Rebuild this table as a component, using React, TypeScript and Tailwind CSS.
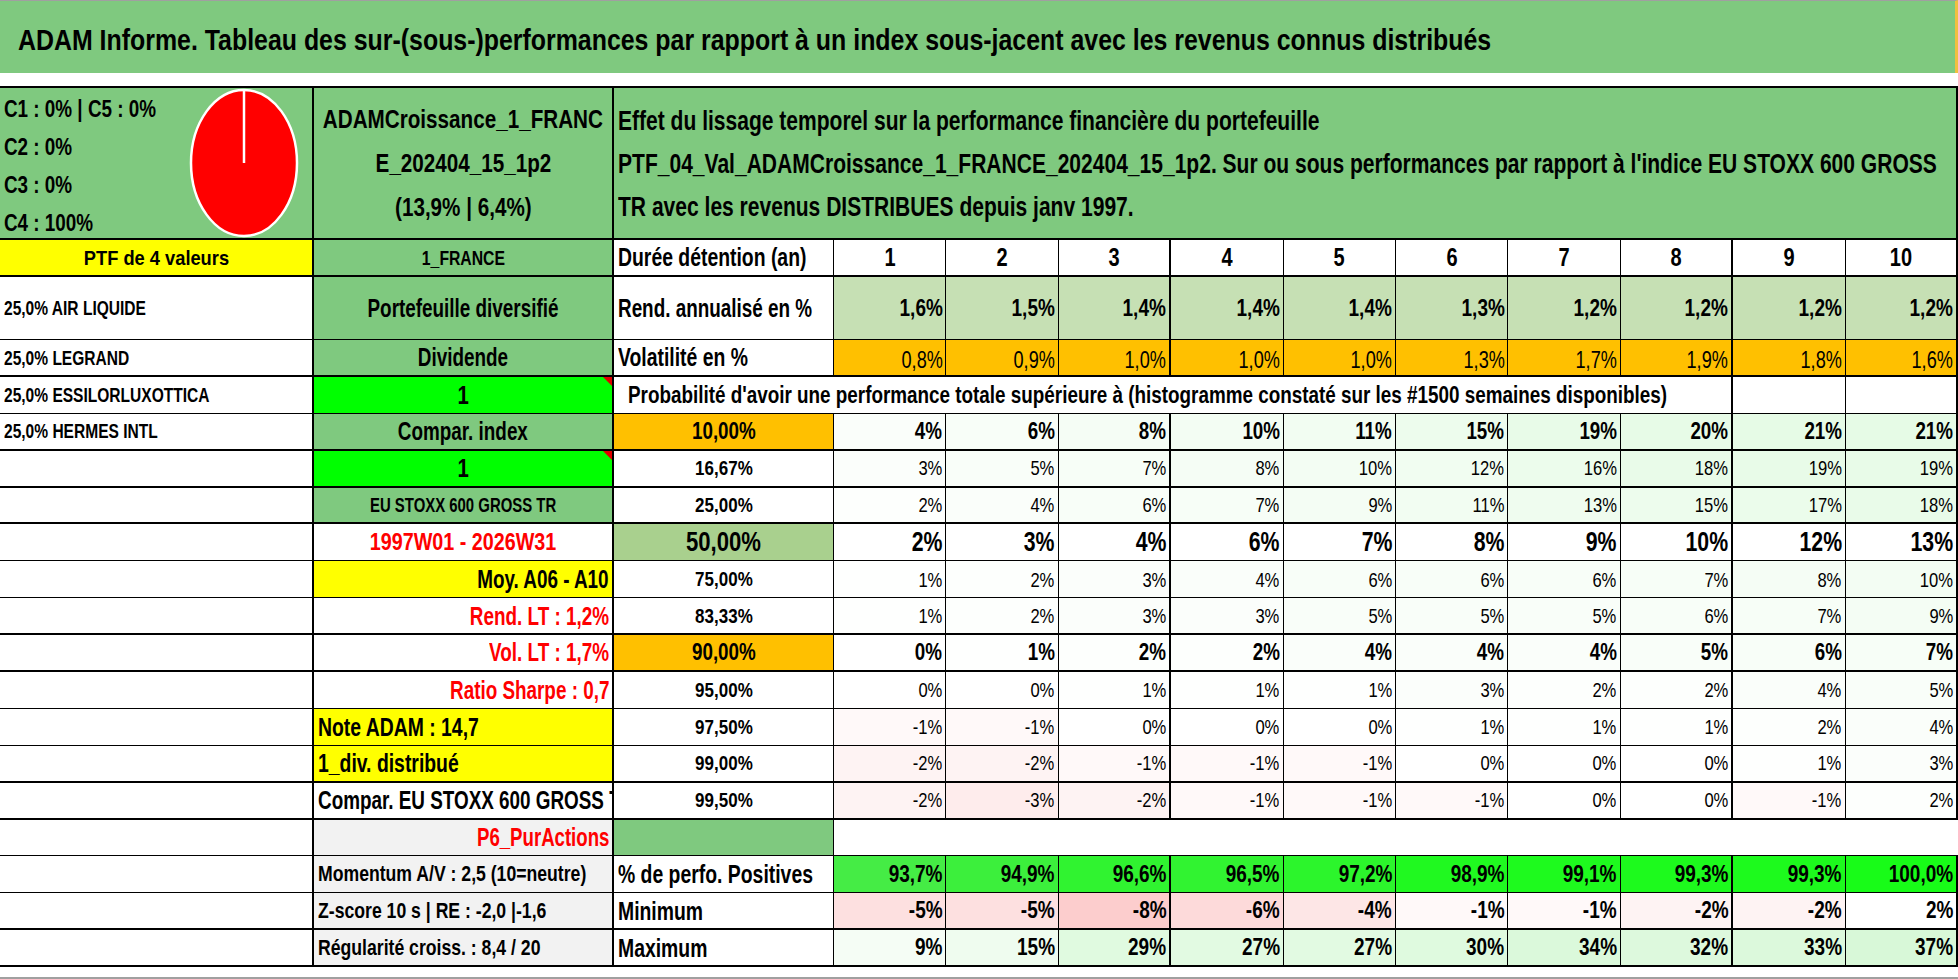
import React from "react";

const base = "border-black flex items-center overflow-hidden whitespace-nowrap relative";

type Al = "l" | "c" | "r";

// horizontal condensing classes (written out in full)
const S71 = "scale-x-[0.71]";
const S74 = "scale-x-[0.74]";
const S76 = "scale-x-[0.76]";
const S775 = "scale-x-[0.775]";
const S79 = "scale-x-[0.79]";
const S80 = "scale-x-[0.8]";
const S81 = "scale-x-[0.81]";
const S82 = "scale-x-[0.82]";
const S84 = "scale-x-[0.84]";
const S83 = "scale-x-[0.83]";
const S85 = "scale-x-[0.85]";
const S87 = "scale-x-[0.87]";

function N({ al = "l", s = S76, children }: { al?: Al; s?: string; children?: React.ReactNode }) {
  const o = al === "r" ? "origin-right" : al === "c" ? "origin-center" : "origin-left";
  return <span className={`inline-block ${s} ${o}`}>{children}</span>;
}

function Cell({
  className = "",
  style,
  al,
  s,
  tri,
  children,
}: {
  className?: string;
  style?: React.CSSProperties;
  al?: Al;
  s?: string;
  tri?: boolean;
  children?: React.ReactNode;
}) {
  return (
    <div className={`${base} ${className}`} style={style}>
      {children !== undefined && children !== "" && al ? (
        <N al={al} s={s}>
          {children}
        </N>
      ) : (
        children
      )}
      {tri ? <span className="absolute top-0 right-0 h-0 w-0 border-t-[9px] border-l-[9px] border-t-[#e00000] border-l-transparent" /> : null}
    </div>
  );
}

const vr = (i: number) => (i === 2 || i === 7 || i === 9 ? "border-r-2" : "border-r");
const bb = (t: boolean) => (t ? "border-b-2" : "border-b");

function mixGreen(v: number, max: number) {
  const t = Math.max(0, Math.min(1, v / max));
  const r = Math.round(255 - 48 * t);
  const g = Math.round(255 - 8 * t);
  return `rgb(${r},${g},${r})`;
}
function mixRed(v: number, max: number) {
  const t = Math.max(0, Math.min(1, -v / max));
  const gb = Math.round(255 - 50 * t);
  return `rgb(${255 - Math.round(3 * t)},${gb},${gb})`;
}
function scaleBg(v: number, gmax: number, rmax: number) {
  return v >= 0 ? mixGreen(v, gmax) : mixRed(v, rmax);
}
function perfoBg(v: number) {
  const t = Math.max(0, Math.min(1, (v - 93) / 7));
  const rb = Math.round(74 - 50 * t);
  const g = Math.round(234 + 18 * t);
  return `rgb(${rb},${g},${rb})`;
}

const rend = ["1,6%", "1,5%", "1,4%", "1,4%", "1,4%", "1,3%", "1,2%", "1,2%", "1,2%", "1,2%"];
const vol = ["0,8%", "0,9%", "1,0%", "1,0%", "1,0%", "1,3%", "1,7%", "1,9%", "1,8%", "1,6%"];
const perfo = [93.7, 94.9, 96.6, 96.5, 97.2, 98.9, 99.1, 99.3, 99.3, 100.0];
const mins = [-5, -5, -8, -6, -4, -1, -1, -2, -2, 2];
const maxs = [9, 15, 29, 27, 27, 30, 34, 32, 33, 37];

type Kind = "bold" | "normal" | "big";
type PRow = {
  a: string;
  b: string;
  bCls: string;
  bAl: Al;
  bS: string;
  tri?: boolean;
  lbl: string;
  lblCls: string;
  lblS: string;
  vals: number[];
  kind: Kind;
  thick: boolean;
};

const probRows: PRow[] = [
  { a: "25,0% HERMES INTL", b: "Compar. index", bCls: "bg-[#7fc97f] justify-center text-[25.5px]", bAl: "c", bS: S74, lbl: "10,00%", lblCls: "bg-[#ffc000] text-[23.5px]", lblS: S80, vals: [4, 6, 8, 10, 11, 15, 19, 20, 21, 21], kind: "bold", thick: true },
  { a: "", b: "1", tri: true, bCls: "bg-[#00ff00] justify-center text-[25.5px]", bAl: "c", bS: S80, lbl: "16,67%", lblCls: "text-[20px]", lblS: S85, vals: [3, 5, 7, 8, 10, 12, 16, 18, 19, 19], kind: "normal", thick: true },
  { a: "", b: "EU STOXX 600 GROSS TR", bCls: "bg-[#7fc97f] justify-center text-[21px]", bAl: "c", bS: S71, lbl: "25,00%", lblCls: "text-[20px]", lblS: S85, vals: [2, 4, 6, 7, 9, 11, 13, 15, 17, 18], kind: "normal", thick: true },
  { a: "", b: "1997W01 - 2026W31", bCls: "justify-center text-[23.5px] text-[#ff0000]", bAl: "c", bS: S84, lbl: "50,00%", lblCls: "bg-[#a9d08e] text-[28px]", lblS: S79, vals: [2, 3, 4, 6, 7, 8, 9, 10, 12, 13], kind: "big", thick: false },
  { a: "", b: "Moy. A06 - A10", bCls: "bg-[#ffff00] justify-end pr-[3px] text-[25.5px]", bAl: "r", bS: S74, lbl: "75,00%", lblCls: "text-[20px]", lblS: S85, vals: [1, 2, 3, 4, 6, 6, 6, 7, 8, 10], kind: "normal", thick: false },
  { a: "", b: "Rend. LT : 1,2%", bCls: "justify-end pr-[3px] text-[25.5px] text-[#ff0000]", bAl: "r", bS: S74, lbl: "83,33%", lblCls: "text-[20px]", lblS: S85, vals: [1, 2, 3, 3, 5, 5, 5, 6, 7, 9], kind: "normal", thick: true },
  { a: "", b: "Vol. LT : 1,7%", bCls: "justify-end pr-[3px] text-[25.5px] text-[#ff0000]", bAl: "r", bS: S74, lbl: "90,00%", lblCls: "bg-[#ffc000] text-[23.5px]", lblS: S80, vals: [0, 1, 2, 2, 4, 4, 4, 5, 6, 7], kind: "bold", thick: true },
  { a: "", b: "Ratio Sharpe : 0,7", bCls: "justify-end pr-[3px] text-[25.5px] text-[#ff0000]", bAl: "r", bS: S74, lbl: "95,00%", lblCls: "text-[20px]", lblS: S85, vals: [0, 0, 1, 1, 1, 3, 2, 2, 4, 5], kind: "normal", thick: false },
  { a: "", b: "Note ADAM : 14,7", bCls: "bg-[#ffff00] pl-[4px] text-[25.5px]", bAl: "l", bS: S76, lbl: "97,50%", lblCls: "text-[20px]", lblS: S85, vals: [-1, -1, 0, 0, 0, 1, 1, 1, 2, 4], kind: "normal", thick: false },
  { a: "", b: "1_div. distribué", bCls: "bg-[#ffff00] pl-[4px] text-[25.5px]", bAl: "l", bS: S76, lbl: "99,00%", lblCls: "text-[20px]", lblS: S85, vals: [-2, -2, -1, -1, -1, 0, 0, 0, 1, 3], kind: "normal", thick: true },
  { a: "", b: "Compar. EU STOXX 600 GROSS TR", bCls: "pl-[4px] text-[25.5px]", bAl: "l", bS: S74, lbl: "99,50%", lblCls: "text-[20px]", lblS: S85, vals: [-2, -3, -2, -1, -1, -1, 0, 0, -1, 2], kind: "normal", thick: true },
];

const LBL = "pl-[4px] text-[25.5px]";
const VB = "justify-end pr-[3px] text-[24.5px]";

export default function App() {
  return (
    <div className="w-[1958px] h-[979px] overflow-hidden bg-white text-black font-bold font-['Liberation_Sans',Arial,sans-serif] flex flex-col">
      {/* title */}
      <div className="h-[73px] shrink-0 bg-[#7fc97f] border-t border-[#a0a0a0] border-r-[3px] border-r-[#f0c040] flex items-center pl-[18px] pt-[4px] text-[30px] whitespace-nowrap">
        <N s={S83}>ADAM Informe. Tableau des sur-(sous-)performances par rapport à un index sous-jacent avec les revenus connus distribués</N>
      </div>
      <div className="h-[13px] shrink-0 bg-white" />

      {/* table */}
      <div className="grid grid-cols-[314px_300px_220px_repeat(10,minmax(0,1fr))] grid-rows-[152px_37px_63px_repeat(17,36.9px)] border-t-2 border-black shrink-0">
        {/* R0 */}
        <Cell className="bg-[#7fc97f] border-r-2 border-b-2 items-stretch">
          <div className="flex flex-col items-start pl-[4px] pt-[2px] text-[23px] leading-[38px]">
            <N s={S82}>C1 : 0% | C5 : 0%</N>
            <N s={S82}>C2 : 0%</N>
            <N s={S82}>C3 : 0%</N>
            <N s={S82}>C4 : 100%</N>
          </div>
          <div className="ml-auto mr-[14px] self-center">
            <svg width="110" height="150" viewBox="0 0 110 150">
              <ellipse cx="55" cy="75" rx="53" ry="73" fill="#ff0000" stroke="#ffffff" strokeWidth="2.5" />
              <line x1="55" y1="75" x2="55" y2="2" stroke="#ffffff" strokeWidth="2.5" />
            </svg>
          </div>
        </Cell>
        <Cell className="bg-[#7fc97f] border-r-2 border-b-2 flex-col justify-center text-[25.5px] leading-[44px] text-center">
          <N al="c" s={S81}>ADAMCroissance_1_FRANC</N>
          <N al="c" s={S81}>E_202404_15_1p2</N>
          <N al="c" s={S81}>(13,9% | 6,4%)</N>
        </Cell>
        <Cell className="col-span-11 bg-[#7fc97f] border-r-2 border-b-2 flex-col items-start justify-center pl-[4px] text-[27.5px] leading-[43px]">
          <N s="scale-x-[0.765]">Effet du lissage temporel sur la performance financière du portefeuille</N>
          <N s="scale-x-[0.765]">PTF_04_Val_ADAMCroissance_1_FRANCE_202404_15_1p2. Sur ou sous performances par rapport à l'indice EU STOXX 600 GROSS</N>
          <N s="scale-x-[0.765]">TR avec les revenus DISTRIBUES depuis janv 1997.</N>
        </Cell>

        {/* R1 */}
        <Cell al="c" s={S87} className="bg-[#ffff00] border-r-2 border-b-2 justify-center text-[21px]">PTF de 4 valeurs</Cell>
        <Cell al="c" s="scale-x-[0.75]" className="bg-[#7fc97f] border-r-2 border-b-2 justify-center text-[21px]">1_FRANCE</Cell>
        <Cell al="l" s={S76} className={`border-r border-b-2 ${LBL}`}>Durée détention (an)</Cell>
        {Array.from({ length: 10 }, (_, i) => (
          <Cell key={`h${i}`} al="c" s={S80} className={`${vr(i)} border-b-2 justify-center text-[25px]`}>
            {i + 1}
          </Cell>
        ))}

        {/* R2 */}
        <Cell al="l" s={S74} className="border-r-2 border-b pl-[4px] text-[21px]">25,0% AIR LIQUIDE</Cell>
        <Cell al="c" s={S74} className="bg-[#7fc97f] border-r-2 border-b justify-center text-[25.5px]">Portefeuille diversifié</Cell>
        <Cell al="l" s={S74} className={`border-r border-b ${LBL}`}>Rend. annualisé en %</Cell>
        {rend.map((v, i) => (
          <Cell key={`r${i}`} al="r" s={S775} className={`bg-[#c6e0b4] ${vr(i)} border-b ${VB}`}>
            {v}
          </Cell>
        ))}

        {/* R3 */}
        <Cell al="l" s={S74} className="border-r-2 border-b-2 pl-[4px] text-[21px]">25,0% LEGRAND</Cell>
        <Cell al="c" s={S74} className="bg-[#7fc97f] border-r-2 border-b-2 justify-center text-[25.5px]">Dividende</Cell>
        <Cell al="l" s={S76} className={`border-r border-b-2 ${LBL}`}>Volatilité en %</Cell>
        {vol.map((v, i) => (
          <Cell key={`v${i}`} al="r" s={S74} className={`bg-[#ffc000] ${vr(i)} border-b-2 justify-end items-end pr-[3px] text-[24.5px] font-normal leading-[30px]`}>
            {v}
          </Cell>
        ))}

        {/* R4 */}
        <Cell al="l" s={S74} className="border-r-2 border-b pl-[4px] text-[21px]">25,0% ESSILORLUXOTTICA</Cell>
        <Cell al="c" s={S80} tri className="bg-[#00ff00] border-r-2 border-b justify-center text-[25.5px]">1</Cell>
        <Cell al="l" s={S82} className="col-span-9 border-r-2 border-b pl-[14px] text-[23px]">
          Probabilité d'avoir une performance totale supérieure à (histogramme constaté sur les #1500 semaines disponibles)
        </Cell>
        <Cell className="border-r border-b" />
        <Cell className="border-r-2 border-b" />

        {/* probability rows */}
        {probRows.map((row, ri) => (
          <React.Fragment key={`p${ri}`}>
            <Cell al="l" s={S74} className={`border-r-2 ${bb(row.thick)} pl-[4px] text-[21px]`}>{row.a}</Cell>
            <Cell al={row.bAl} s={row.bS} tri={row.tri} className={`border-r-2 ${bb(row.thick)} ${row.bCls}`}>{row.b}</Cell>
            <Cell al="c" s={row.lblS} className={`border-r ${bb(row.thick)} justify-center ${row.lblCls}`}>{row.lbl}</Cell>
            {row.vals.map((v, i) => (
              <Cell
                key={`pv${ri}-${i}`}
                al="r"
                s={row.kind === "bold" ? S80 : row.kind === "big" ? S76 : S79}
                className={`${vr(i)} ${bb(row.thick)} justify-end pr-[3px] ${
                  row.kind === "bold" ? "text-[23.5px]" : row.kind === "big" ? "text-[28px]" : "text-[21px] font-normal"
                }`}
                style={{ backgroundColor: row.kind === "big" ? "#ffffff" : scaleBg(v, 40, 8) }}
              >
                {v}%
              </Cell>
            ))}
          </React.Fragment>
        ))}

        {/* R16 */}
        <Cell className="border-r-2 border-b" />
        <Cell al="r" s="scale-x-[0.73]" className="bg-[#f2f2f2] border-r-2 border-b justify-end pr-[3px] text-[25.5px] text-[#ff0000]">P6_PurActions</Cell>
        <Cell className="bg-[#7fc97f] border-r border-b" />
        <Cell className="col-span-10 border-b" />

        {/* R17 */}
        <Cell className="border-r-2 border-b" />
        <Cell al="l" s={S82} className="bg-[#f2f2f2] border-r-2 border-b pl-[4px] text-[21.5px]">Momentum A/V : 2,5 (10=neutre)</Cell>
        <Cell al="l" s={S76} className={`border-r border-b ${LBL}`}>% de perfo. Positives</Cell>
        {perfo.map((v, i) => (
          <Cell key={`pf${i}`} al="r" s={S775} className={`${vr(i)} border-b ${VB}`} style={{ backgroundColor: perfoBg(v) }}>
            {v.toFixed(1).replace(".", ",")}%
          </Cell>
        ))}

        {/* R18 */}
        <Cell className="border-r-2 border-b-2" />
        <Cell al="l" s={S82} className="bg-[#f2f2f2] border-r-2 border-b-2 pl-[4px] text-[21.5px]">Z-score 10 s | RE : -2,0 |-1,6</Cell>
        <Cell al="l" s={S76} className={`border-r border-b-2 ${LBL}`}>Minimum</Cell>
        {mins.map((v, i) => (
          <Cell key={`mn${i}`} al="r" s={S775} className={`${vr(i)} border-b-2 ${VB}`} style={{ backgroundColor: v >= 0 ? "#ffffff" : mixRed(v, 8) }}>
            {v}%
          </Cell>
        ))}

        {/* R19 */}
        <Cell className="border-r-2 border-b-2" />
        <Cell al="l" s={S82} className="bg-[#f2f2f2] border-r-2 border-b-2 pl-[4px] text-[21.5px]">Régularité croiss. : 8,4 / 20</Cell>
        <Cell al="l" s={S76} className={`border-r border-b-2 ${LBL}`}>Maximum</Cell>
        {maxs.map((v, i) => (
          <Cell key={`mx${i}`} al="r" s={S775} className={`${vr(i)} border-b-2 ${VB}`} style={{ backgroundColor: mixGreen(v, 45) }}>
            {v}%
          </Cell>
        ))}
      </div>
      <div className="flex-1 border-b-2 border-[#a0a0a0]" />
    </div>
  );
}
